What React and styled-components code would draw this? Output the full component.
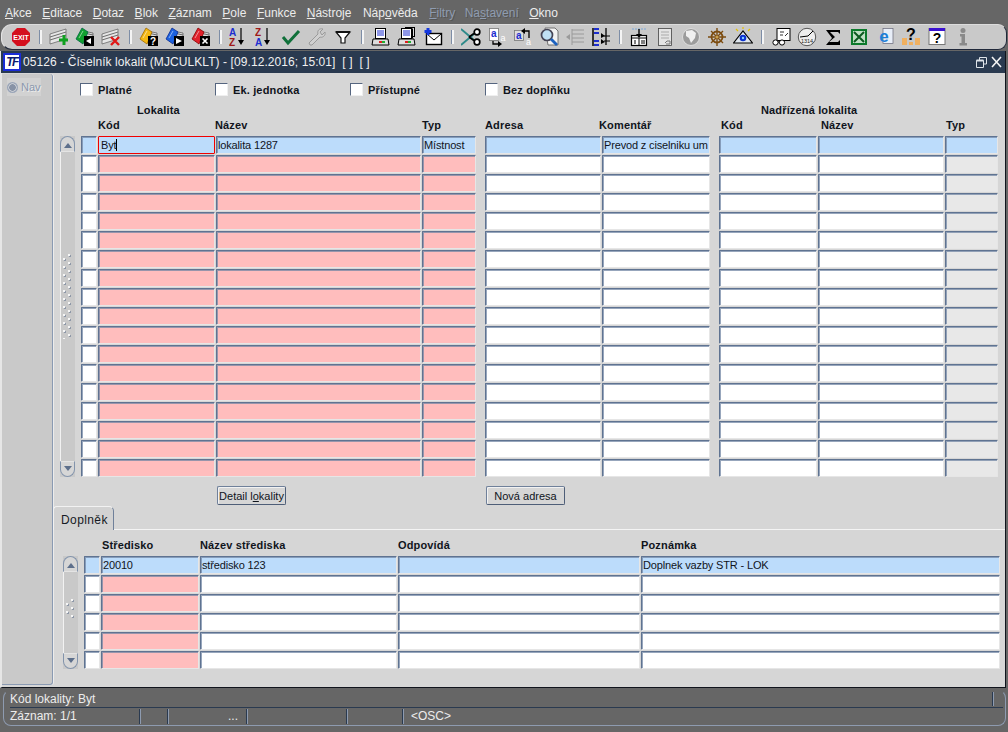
import React from "react";
import styled, { createGlobalStyle } from "styled-components";

const Global = createGlobalStyle`
  html, body { margin: 0; padding: 0; background: #666666; overflow: hidden; }
  body { font-family: "Liberation Sans", Arial, sans-serif; font-size: 11px; color: #10141c; }
  * { box-sizing: border-box; }
`;

const Page = styled.div`
  width: 1008px; height: 732px; display: flex; flex-direction: column; background: #666666;
`;
const MenuBar = styled.nav`
  height: 24px; display: flex; align-items: center; gap: 10.5px; padding: 2px 0 0 5px;
  font-size: 12px; color: #e6e6e6; flex: none;
`;
const MenuItem = styled.span`
  color: ${p => (p.$off ? "#8f9cb0" : "#ececec")};
  margin-left: ${p => p.$shift || 0}px;
  ${p => p.$off && "text-shadow: 1px 1px 0 #555;"}
  u { text-underline-offset: 1px; }
`;
const ToolBar = styled.div`
  height: 26px; margin: 0 1px; flex: none; display: flex; align-items: center; padding: 0 0 0 6px;
  background: #c9c9c9; border-radius: 11px 9px 9px 11px;
  border-top: 1px solid #dcdcdc; border-left: 1px solid #e4e4e4; border-bottom: 1px solid #20283a; border-right: 1px solid #20283a;
`;
const ToolSlot = styled.span`
  width: 26px; height: 24px; display: flex; align-items: center; justify-content: center; flex: none;
`;
const ToolSep = styled.span`
  width: 12px; height: 14px; flex: none; display: flex; justify-content: center;
  &::before { content: ""; width: 2px; height: 14px; background: #f4f4f4; border-left: 1px solid #7d8da6; }
`;
const Window = styled.section`
  width: 1006px; height: 637px; margin-top: 1px; flex: none; display: flex; flex-direction: column;
  background: #d6d6d6; border-left: 2px solid #e6e6e6; border-top: 0; border-right: 1px solid #10141c; border-bottom: 1px solid #10141c;
`;
const TitleBar = styled.header`
  height: 22px; flex: none; background: #2a3a50; color: #f0f0f0; font-size: 12px;
  display: flex; align-items: center; padding: 0 3px 0 2px; margin-left: -1px;
`;
const TitleText = styled.span`
  margin-left: 2px; flex: 1; white-space: pre; letter-spacing: .08px;
`;
const Logo = styled.span`
  width: 18px; height: 18px; background: #fff; border: 2px solid #1a2cd8; color: #0c1a70; flex: none;
  font: italic bold 12px "Liberation Sans", sans-serif; display: flex; align-items: center; justify-content: center; letter-spacing: -1.5px;
`;
const Body = styled.div`
  flex: 1; display: flex; min-height: 0;
`;
const NavPanel = styled.aside`
  width: 51px; flex: none; background: #c9c9c9; border-right: 1px solid #8a9ab2; border-bottom: 1px solid #8a9ab2;
  box-shadow: 1px 0 0 #ececec; border-radius: 0 3px 3px 0; margin: 1px 0 2px; padding: 4px 0 0 5px;
`;
const NavTab = styled.div`
  width: 34px; height: 18px; background: #d2d2d2; display: flex; align-items: center; gap: 3px; padding-left: 0;
  color: #8b98ae; font-size: 11px; text-shadow: 1px 1px 0 #ececec;
`;
const Radio = styled.i`
  width: 11px; height: 11px; border-radius: 50%; flex: none; display: block;
  background: radial-gradient(circle, #8792a6 0 3px, #c6cad1 3.5px 4px, #9aa5b8 4.5px);
`;
const Content = styled.main`
  flex: 1; min-width: 0; display: flex; flex-direction: column;
`;
const Upper = styled.div`
  padding: 9px 0 0 7px; flex: none;
`;
const Filters = styled.div`
  display: flex; height: 16px; margin: 0 0 5px 20px;
`;
const Filter = styled.label`
  width: 135px; display: flex; align-items: center; gap: 5px; font-weight: bold; font-size: 11px; letter-spacing: .15px;
`;
const CheckBox = styled.i`
  width: 13px; height: 13px; display: block; flex: none; background: #fff; margin-top: -2px;
  border-top: 1px solid #55657f; border-left: 1px solid #55657f; border-right: 1px solid #efefef; border-bottom: 1px solid #efefef;
`;
const Grid = styled.div`
  display: grid; column-gap: 1px; row-gap: 1px;
  grid-template-columns: ${p => p.$cols};
  grid-template-rows: ${p => p.$rows};
`;
const GroupLabel = styled.div`
  grid-row: 1; grid-column: ${p => p.$col}; margin-left: ${p => p.$shift}px;
  font-weight: bold; white-space: nowrap; align-self: center; letter-spacing: .15px;
`;
const ColLabel = styled.div`
  grid-row: ${p => p.$row}; grid-column: ${p => p.$col}; margin-left: ${p => p.$shift || 0}px;
  padding-top: ${p => p.$drop || 0}px;
  font-weight: bold; white-space: nowrap; align-self: start; line-height: 15px; letter-spacing: .15px;
`;
const Field = styled.div`
  height: 18px; grid-row: ${p => p.$row}; grid-column: ${p => p.$col};
  background: ${p => p.$bg}; border-radius: 1px;
  border-top: 1px solid #5f7391; border-left: 1px solid #5f7391; border-right: 1px solid #e6e6e6; border-bottom: 1px solid #e6e6e6;
  box-shadow: inset 1px 1px 0 rgba(116,136,166,.75);
  ${p => p.$focus && "border: 1px solid #f00000; box-shadow: none;"}
  padding: 1px 0 0 1px; font-size: 11px; line-height: 15px; white-space: nowrap; overflow: hidden; letter-spacing: -.15px;
`;
const Caret = styled.span`
  border-right: 1px solid #000; margin-left: 1px;
`;
const ScrollBar = styled.div`
  grid-column: 1; grid-row: ${p => p.$row}; width: 15px; display: flex; flex-direction: column; background: #c9c9c9;
`;
const ScrollBtn = styled.div`
  height: 16px; flex: none; background: #d6d6d6; display: flex; align-items: center; justify-content: center;
  border: 1px solid #8394ac; border-${p => (p.$up ? "bottom" : "top")}-color: #e4e4e4;
  border-radius: ${p => (p.$up ? "8px 8px 0 0" : "0 0 8px 8px")};
  &::before {
    content: ""; width: 0; height: 0; border-left: 4px solid transparent; border-right: 4px solid transparent;
    ${p => (p.$up ? "border-bottom: 5px solid #5d6f8b; margin-top: 2px;" : "border-top: 5px solid #5d6f8b; margin-bottom: 2px;")}
  }
`;
const Track = styled.div`
  flex: 1; display: flex; align-items: center; justify-content: center; padding-bottom: ${p => p.$lift}px;
  border-left: 1px solid #f2f2f2;
`;
const Grip = styled.div`
  width: 10px; height: ${p => p.$h}px;
  background-image:
    radial-gradient(circle at 1px 1px, #f6f6f6 0 1.2px, transparent 1.3px),
    radial-gradient(circle at 2px 2px, #8e98a8 0 1.1px, transparent 1.2px),
    radial-gradient(circle at 1px 1px, #f6f6f6 0 1.2px, transparent 1.3px),
    radial-gradient(circle at 2px 2px, #8e98a8 0 1.1px, transparent 1.2px);
  background-size: 10px 8px;
  background-position: 0 4px, 0 4px, 5px 0, 5px 0;
`;
const ActionButton = styled.button`
  grid-column: ${p => p.$col}; grid-row: ${p => p.$row}; justify-self: start; width: ${p => p.$w}px; height: 19px; margin: 8px 0 0 ${p => p.$shift}px;
  background: #d6d6d6; border: 1px solid #6f809a; border-right-color: #4e5e78; border-bottom-color: #4e5e78;
  box-shadow: inset 1px 1px 0 #f2f2f2; border-radius: 2px; padding: 0; font: 11px "Liberation Sans", sans-serif; color: #10141c;
`;
const TabStrip = styled.div`
  flex: none; height: 24px; margin-top: 1px; display: flex; align-items: stretch;
`;
const Tab = styled.div`
  width: 61px; background: #d2d2d2; border: 1px solid #f2f2f2; border-bottom: 0; border-right-color: #6f809a; border-radius: 4px 5px 0 0;
  font-size: 12px; letter-spacing: .4px; display: flex; align-items: center; padding: 2px 0 0 7px; color: #151a24;
`;
const TabLine = styled.div`
  flex: 1; border-bottom: 1px solid #f4f4f4;
`;
const Lower = styled.div`
  padding: 7px 0 0 10px; flex: none;
`;
const StatusBar = styled.footer`
  margin: 2px 2px 0 3px; flex: none; height: 36px; display: flex; flex-direction: column; color: #ececec; font-size: 12px;
  border-left: 1px solid #8e9bb0; border-right: 1px solid #8e9bb0; border-bottom: 1px solid #8e9bb0; border-radius: 8px;
  border-top: 1px solid transparent; padding: 0 0 0 6px;
`;
const StatusRow = styled.div`
  height: 17px; display: flex; flex: none; align-items: stretch; line-height: 17px;
  ${p => p.$ruled && "border-bottom: 1px solid #2a3a50; margin-right: 2px;"}
`;
const StatusCell = styled.div`
  width: ${p => p.$w}px; ${p => p.$grow && "flex: 1;"} white-space: nowrap; text-align: ${p => p.$align || "left"};
  padding-right: ${p => p.$pr || 0}px; padding-left: ${p => p.$pl || 0}px;
  ${p => p.$rule && "border-right: 1px solid #2a3a50; box-shadow: 1px 0 0 #8e9bb0; margin: 1px 0; line-height: 15px;"}
`;

const S = ({ children }) => <svg width="20" height="20" viewBox="0 0 20 20" aria-hidden="true">{children}</svg>;
const Stripes = ({ x = 0 }) => (
  <g transform={`translate(${x} 0)`}>
    <path d="M1 7L17 2V12L1 17Z" fill="#e6e6e6" stroke="#5a5a5a" strokeWidth=".7" />
    <path d="M1 10L17 5M1 13L17 8" stroke="#6d6d6d" strokeWidth="1" />
  </g>
);
const Cards = ({ c, d }) => (
  <g>
    <path d="M8 4L18 6V12L8 12Z" fill="#ddd" stroke="#555" strokeWidth=".7" />
    <path d="M9 6L18 8M9 9L18 10" stroke="#666" />
    <path d="M1 12L7 1L13 5L8 17Z" fill={c} stroke={d} strokeWidth=".8" />
    <path d="M4 11L8 4" stroke="#fff" strokeOpacity=".5" />
  </g>
);
const Black = ({ children }) => (
  <g><rect x="9" y="9" width="10" height="10" fill="#000" />{children}</g>
);
const Plus = () => <path d="M15 8V18M10 13H19" stroke="#10a020" strokeWidth="3" />;
const RedX = () => <path d="M10 10L18 18M18 10L10 18" stroke="#e01818" strokeWidth="2.4" />;
const Sorted = ({ top, bot, a, b }) => (
  <g fontFamily="Liberation Sans" fontWeight="bold" fontSize="10">
    <text x="0" y="9" fill={a}>{top}</text>
    <text x="0" y="19" fill={b}>{bot}</text>
    <path d="M12 1V14" stroke="#000" strokeWidth="1.2" />
    <path d="M9 13H15L12 18Z" fill="#000" />
  </g>
);
const Doc = ({ x, y, w, h, fill = "#fff" }) => <rect x={x} y={y} width={w} height={h} fill={fill} stroke="#444" strokeWidth=".8" />;
const Printer = () => (
  <g>
    <rect x="4.5" y="1.5" width="10" height="10" fill="#fff" stroke="#000" />
    <path d="M6 4H13M6 6H13M6 8H13" stroke="#1c2ed0" />
    <path d="M2 12H17L18 18H1Z" fill="#ddd" stroke="#000" />
    <rect x="8" y="14" width="3" height="2" fill="#e02020" /><rect x="11" y="14" width="3" height="2" fill="#20b030" />
  </g>
);
const icons = {
  exit: <svg width="20" height="20" viewBox="0 0 20 20" aria-hidden="true"><path d="M6 1H14L19 6V14L14 19H6L1 14V6Z" fill="#d40f1e" /><text x="10" y="13" fontFamily="Liberation Sans" fontWeight="bold" fontSize="7" fill="#fff" textAnchor="middle">EXIT</text></svg>,
  add: <S><Stripes /><Plus /></S>,
  open: <S><Cards c="#12a030" d="#064" /><Black><path d="M16 11V17L11 14Z" fill="#fff" /></Black></S>,
  del: <S><Stripes /><RedX /></S>,
  q: <S><Cards c="#f4b814" d="#a06a00" /><Black><text x="14" y="18" fontFamily="Liberation Sans" fontWeight="bold" fontSize="10" fill="#fff" textAnchor="middle">?</text></Black></S>,
  play: <S><Cards c="#1c62e0" d="#0a2a90" /><Black><path d="M11 11V17L17 14Z" fill="#fff" /></Black></S>,
  cx: <S><Cards c="#e0202a" d="#800" /><Black><path d="M11.5 11.5L16.5 16.5M16.5 11.5L11.5 16.5" stroke="#fff" strokeWidth="1.6" /></Black></S>,
  az: <S><Sorted top="A" bot="Z" a="#1c2ed0" b="#a01818" /></S>,
  za: <S><Sorted top="Z" bot="A" a="#a01818" b="#1c2ed0" /></S>,
  check: <S><path d="M2 10L7 16L18 4" fill="none" stroke="#10703a" strokeWidth="3" /></S>,
  wrench: <S><path d="M3 18L2 16L11 7C10 4 12 1 16 2L13 5L15 8L18 5C19 9 15 11 13 10L5 18Z" fill="#d0d0d0" stroke="#9a9a9a" /></S>,
  funnel: <S><path d="M3 5H17L12 11V16H8V11Z" fill="#fff" stroke="#111" strokeWidth="1.2" /><path d="M3 5H17" stroke="#111" strokeWidth="2" /></S>,
  print: <S><Printer /></S>,
  prints: <S><rect x="8.5" y="0.5" width="9" height="9" fill="#ddd" stroke="#000" /><rect x="6.5" y="2" width="9" height="9" fill="#fff" stroke="#000" /><Printer /></S>,
  mail: <S><rect x="3.5" y="6.5" width="15" height="11" fill="#fff" stroke="#000" strokeWidth="1.4" /><path d="M4 7L11 13L18 7" fill="none" stroke="#000" /><path d="M5 1V8M1.5 4.5H8.5" stroke="#1438e0" strokeWidth="3" /></S>,
  cut: <S><path d="M0 2L13 13M0 18L13 7" stroke="#2d8a8a" strokeWidth="1.8" /><circle cx="16" cy="5" r="2.8" fill="#fff" stroke="#000" strokeWidth="1.7" /><circle cx="16" cy="15" r="2.8" fill="#fff" stroke="#000" strokeWidth="1.7" /><path d="M8 10L13 6.5M8 10L13 13.5" stroke="#000" strokeWidth="1.7" /></S>,
  a1: <S><rect x="2.5" y="1.5" width="9" height="12" fill="#fff" stroke="#777" strokeWidth=".8" /><text x="4" y="10" fontFamily="Liberation Sans" fontSize="10" fontWeight="bold" fill="#1c2ed0">a</text><path d="M6 14V17H12" fill="none" stroke="#000" strokeWidth="1.3" /><path d="M11 14L15 17L11 20Z" fill="#000" /><text x="13.5" y="14" fontFamily="Liberation Sans" fontSize="9" fill="#fff">a</text></S>,
  a2: <S><rect x="1.5" y="3.5" width="9" height="10" fill="#ddd" stroke="#777" strokeWidth=".8" /><text x="3" y="12" fontFamily="Liberation Sans" fontSize="10" fontWeight="bold" fill="#1c2ed0">a</text><path d="M11 4H16V11" fill="none" stroke="#000" strokeWidth="1.3" /><path d="M12 1L8 4L12 7Z" fill="#000" /><text x="13" y="18" fontFamily="Liberation Sans" fontSize="9" fill="#fff">a</text></S>,
  search: <S><path d="M6 1H16L19 4V18H9Z" fill="#f2f2f2" stroke="#666" strokeWidth=".9" /><circle cx="8" cy="8" r="5.5" fill="#bfe0f4" stroke="#445" strokeWidth="1.7" /><path d="M12 12L18 18" stroke="#1c62c0" strokeWidth="2.8" /></S>,
  listOff: <S><path d="M1 10L5 7V13Z" fill="#9a9a9a" /><path d="M7 2V18M7 3H19M7 7H19M7 11H19M7 15H19" stroke="#9a9a9a" /></S>,
  list: <S><path d="M2 1V19" stroke="#000" strokeWidth="1.5" /><path d="M3 2H8M3 6H8M3 14H8M3 18H8" stroke="#1c2ed0" strokeWidth="2" /><path d="M10 6L14 9L10 11ZM10 12L14 15L10 17Z" fill="#000" /><path d="M13 9H19M13 14H19" stroke="#000" /><path d="M15 1V18" stroke="#000" strokeWidth="1.3" /></S>,
  imp: <S><path d="M3 2H17" stroke="#7da8d8" strokeDasharray="2 1" /><rect x="2.5" y="8.5" width="15" height="10" fill="#fff" stroke="#000" strokeWidth="1.2" /><path d="M2 11H18M10 11V18M6 13V17M13 13V17M15 13V17" stroke="#000" /><path d="M10 2V9" stroke="#000" strokeWidth="1.4" /><path d="M7 7H13L10 11Z" fill="#000" /></S>,
  docOff: <S><Doc x={3.5} y={1.5} w={13} h={17} fill="#e4e4e4" /><path d="M6 5H14M6 8H14M6 11H14" stroke="#aaa" /><path d="M10 16L12 14H15V17H11" fill="none" stroke="#777" /></S>,
  globe: <S><circle cx="10" cy="10" r="8.5" fill="#9c9c9c" stroke="#ddd" /><path d="M5 4L11 3L15 6L14 11L10 16L8 11L5 9Z" fill="#f0f0f0" /></S>,
  wheel: <S><circle cx="10" cy="10" r="5.5" fill="none" stroke="#7c4c10" strokeWidth="1.8" /><path d="M10 1V19M1 10H19M4 4L16 16M16 4L4 16" stroke="#7c4c10" strokeWidth="1.4" /><circle cx="10" cy="10" r="1.6" fill="#c8a050" /></S>,
  eye: <S><path d="M0.5 16L10 4L19.5 16Z" fill="#dfe6ef" stroke="#000" strokeWidth="1.2" /><path d="M10 2V0M5 4L3 2M15 4L17 2" stroke="#e6c000" strokeWidth="1.2" /><circle cx="10" cy="11" r="3.3" fill="#0a30d0" /><circle cx="10" cy="11" r="1.2" fill="#7fd0ff" /></S>,
  glasses: <S><rect x="6" y="1.5" width="13" height="12" fill="#fff" stroke="#000" /><path d="M9 5H13M9 8H12M14 9L17 6" stroke="#333" /><circle cx="4.5" cy="15.5" r="2.6" fill="#fff" stroke="#000" /><circle cx="11" cy="15.5" r="2.6" fill="#fff" stroke="#000" /><path d="M7 15H8.5" stroke="#000" /></S>,
  clock: <S><circle cx="10" cy="10" r="8.7" fill="#eee" stroke="#555" /><path d="M3 10L11 9L16 4" fill="none" stroke="#000" /><text x="10" y="16" fontFamily="Liberation Sans" fontSize="5.5" textAnchor="middle" fill="#222">1314</text></S>,
  sigma: <S><path d="M3 3H17V7L15 5H7L12 10L6 15H15L17 13V18H3L9 11Z" fill="#000" /></S>,
  excel: <S><rect x="2" y="2" width="16" height="16" fill="#0c7a2c" /><rect x="4" y="4" width="12" height="12" fill="#bfe0c4" /><path d="M5 5L15 15M15 5L5 15" stroke="#0c5a20" strokeWidth="2" /></S>,
  ie: <S><rect x="8" y="1.5" width="10" height="15" fill="#e8eef8" stroke="#667" strokeWidth=".7" /><text x="9" y="15" fontFamily="Liberation Sans" fontWeight="bold" fontSize="17" textAnchor="middle" fill="#1c80d8">e</text></S>,
  helpP: <S><text x="10" y="13" fontFamily="Liberation Sans" fontWeight="bold" fontSize="16" textAnchor="middle" fill="#000">?</text><rect x="1" y="11" width="5" height="7" fill="#f0b060" /><rect x="14" y="11" width="5" height="7" fill="#f0b060" /><rect x="8" y="15" width="4" height="3" fill="#f0b060" /></S>,
  helpW: <S><rect x="2" y="1.5" width="16" height="16" fill="#fff" stroke="#777" /><rect x="2" y="1" width="16" height="3" fill="#3a10d0" /><text x="10" y="16" fontFamily="Liberation Sans" fontWeight="bold" fontSize="14" textAnchor="middle" fill="#000">?</text></S>,
  info: <S><circle cx="10" cy="3.5" r="2.5" fill="#8a8a8a" /><path d="M7 7H12V16H14V18.5H6.5V16H8.5V9.5H7Z" fill="#8a8a8a" /></S>,
};
const tools = ["exit","|","add","open","del","|","q","play","cx","|","az","za","check","wrench","funnel","|","print","prints","mail","|","cut","a1","a2","search","listOff","list","|","imp","docOff","globe","wheel","eye","|","glasses","clock","sigma","excel","ie","helpP","helpW","info"];

const COLS_TOP = "20px 16px 117px 205px 54px 7px 116px 108px 7px 98px 126px 53px";
const TOP_FIELDS = [3, 4, 5, 7, 8, 10, 11, 12];
const COLS_LOW = "20px 16px 98px 197px 242px 359px";
const LOW_FIELDS = [3, 4, 5, 6];
const TOP_FIRST = { 3: "Byt", 4: "lokalita 1287", 5: "Místnost", 8: "Prevod z ciselniku um" };
const LOW_FIRST = { 3: "20010", 4: "středisko 123", 6: "Doplnek vazby STR - LOK" };
const BLUE = "#bcdcfb", PINK = "#ffbdbd", WHITE = "#ffffff", GREY = "#e8e8e8";

const topBg = (i, c) => (i === 0 ? BLUE : [3, 4, 5].includes(c) ? PINK : c === 12 ? GREY : WHITE);
const lowBg = (i, c) => (i === 0 ? BLUE : c === 3 ? PINK : WHITE);

const Scroller = ({ row, grip, lift }) => (
  <ScrollBar $row={row}>
    <ScrollBtn $up />
    <Track $lift={lift}><Grip $h={grip} /></Track>
    <ScrollBtn />
  </ScrollBar>
);

export default function App() {
  return (
    <Page>
      <Global />
      <MenuBar>
        <MenuItem><u>A</u>kce</MenuItem>
        <MenuItem><u>E</u>ditace</MenuItem>
        <MenuItem><u>D</u>otaz</MenuItem>
        <MenuItem><u>B</u>lok</MenuItem>
        <MenuItem><u>Z</u>áznam</MenuItem>
        <MenuItem><u>P</u>ole</MenuItem>
        <MenuItem><u>F</u>unkce</MenuItem>
        <MenuItem><u>N</u>ástroje</MenuItem>
        <MenuItem $shift={1}>Náp<u>o</u>věda</MenuItem>
        <MenuItem $off $shift={1}><u>F</u>iltry</MenuItem>
        <MenuItem $off $shift={-1}>Na<u>s</u>tavení</MenuItem>
        <MenuItem>
          <u>O</u>kno
        </MenuItem>
      </MenuBar>
      <ToolBar>
        {tools.map((t, i) => (t === "|" ? <ToolSep key={i} /> : <ToolSlot key={i}>{icons[t]}</ToolSlot>))}
      </ToolBar>
      <Window>
        <TitleBar>
          <Logo>TF</Logo>
          <TitleText>05126 - Číselník lokalit (MJCULKLT) - [09.12.2016; 15:01]  [ ]  [ ]</TitleText>
          <svg width="26" height="14" viewBox="0 0 26 14" aria-hidden="true">
            <path d="M0.5 5.5H7.5V12.5H0.5ZM3.5 5V2.5H10.5V9H8" fill="none" stroke="#dfe4ea" />
            <path d="M0.5 5.5H7.5" stroke="#dfe4ea" strokeWidth="2" />
            <path d="M16 2L25 12M25 2L16 12" stroke="#f4f4f4" strokeWidth="1.6" />
          </svg>
        </TitleBar>
        <Body>
          <NavPanel><NavTab><Radio />Nav</NavTab></NavPanel>
          <Content>
            <Upper>
              <Filters>
                {["Platné", "Ek. jednotka", "Přístupné", "Bez doplňku"].map(f => (
                  <Filter key={f}><CheckBox />{f}</Filter>
                ))}
              </Filters>
              <Grid $cols={COLS_TOP} $rows={`14px 17px repeat(18, 18px) 27px`}>
                <GroupLabel $col={3} $shift={39}>Lokalita</GroupLabel>
                <GroupLabel $col={10} $shift={42}>Nadřízená lokalita</GroupLabel>
                <ColLabel $row={2} $col={3}>Kód</ColLabel>
                <ColLabel $row={2} $col={4} $shift={-1}>Název</ColLabel>
                <ColLabel $row={2} $col={5}>Typ</ColLabel>
                <ColLabel $row={2} $col={7}>Adresa</ColLabel>
                <ColLabel $row={2} $col={8} $shift={-3}>Komentář</ColLabel>
                <ColLabel $row={2} $col={10} $shift={2}>Kód</ColLabel>
                <ColLabel $row={2} $col={11} $shift={3}>Název</ColLabel>
                <ColLabel $row={2} $col={12} $shift={1}>Typ</ColLabel>
                <Scroller row="3 / span 18" grip={85} lift={20} />
                {Array.from({ length: 18 }, (_, i) => (
                  <React.Fragment key={i}>
                    <Field $row={i + 3} $col={2} $bg={i === 0 ? BLUE : WHITE} />
                    {TOP_FIELDS.map(c => (
                      <Field key={c} $row={i + 3} $col={c} $bg={topBg(i, c)} $focus={i === 0 && c === 3}>
                        {i === 0 && c === 3 ? <Caret>Byt</Caret> : i === 0 ? TOP_FIRST[c] : null}
                      </Field>
                    ))}
                  </React.Fragment>
                ))}
                <ActionButton $row={21} $col={4} $shift={1} $w={69}>Detail l<u>o</u>kality</ActionButton>
                <ActionButton $row={21} $col={7} $shift={1} $w={79}>Nová adresa</ActionButton>
              </Grid>
            </Upper>
            <TabStrip>
              <Tab>Doplněk</Tab>
              <TabLine />
            </TabStrip>
            <Lower>
              <Grid $cols={COLS_LOW} $rows={`18px repeat(6, 18px)`}>
                <ColLabel $row={1} $col={3} $shift={1} $drop={1}>Středisko</ColLabel>
                <ColLabel $row={1} $col={4} $drop={1}>Název střediska</ColLabel>
                <ColLabel $row={1} $col={5} $drop={1}>Odpovídá</ColLabel>
                <ColLabel $row={1} $col={6} $drop={1}>Poznámka</ColLabel>
                <Scroller row="2 / span 6" grip={20} lift={8} />
                {Array.from({ length: 6 }, (_, i) => (
                  <React.Fragment key={i}>
                    <Field $row={i + 2} $col={2} $bg={i === 0 ? BLUE : WHITE} />
                    {LOW_FIELDS.map(c => (
                      <Field key={c} $row={i + 2} $col={c} $bg={lowBg(i, c)}>{i === 0 ? LOW_FIRST[c] : null}</Field>
                    ))}
                  </React.Fragment>
                ))}
              </Grid>
            </Lower>
          </Content>
        </Body>
      </Window>
      <StatusBar>
        <StatusRow $ruled>
          <StatusCell $grow>Kód lokality: Byt</StatusCell>
          <StatusCell $w={14} $rule />
          <StatusCell $w={10} />
        </StatusRow>
        <StatusRow>
          <StatusCell $w={130} $rule>Záznam: 1/1</StatusCell>
          <StatusCell $w={28} $rule />
          <StatusCell $w={79} $rule $align="right" $pr={8}>...</StatusCell>
          <StatusCell $w={100} $rule />
          <StatusCell $w={56} $rule />
          <StatusCell $grow $pl={8}>&lt;OSC&gt;</StatusCell>
        </StatusRow>
      </StatusBar>
    </Page>
  );
}
